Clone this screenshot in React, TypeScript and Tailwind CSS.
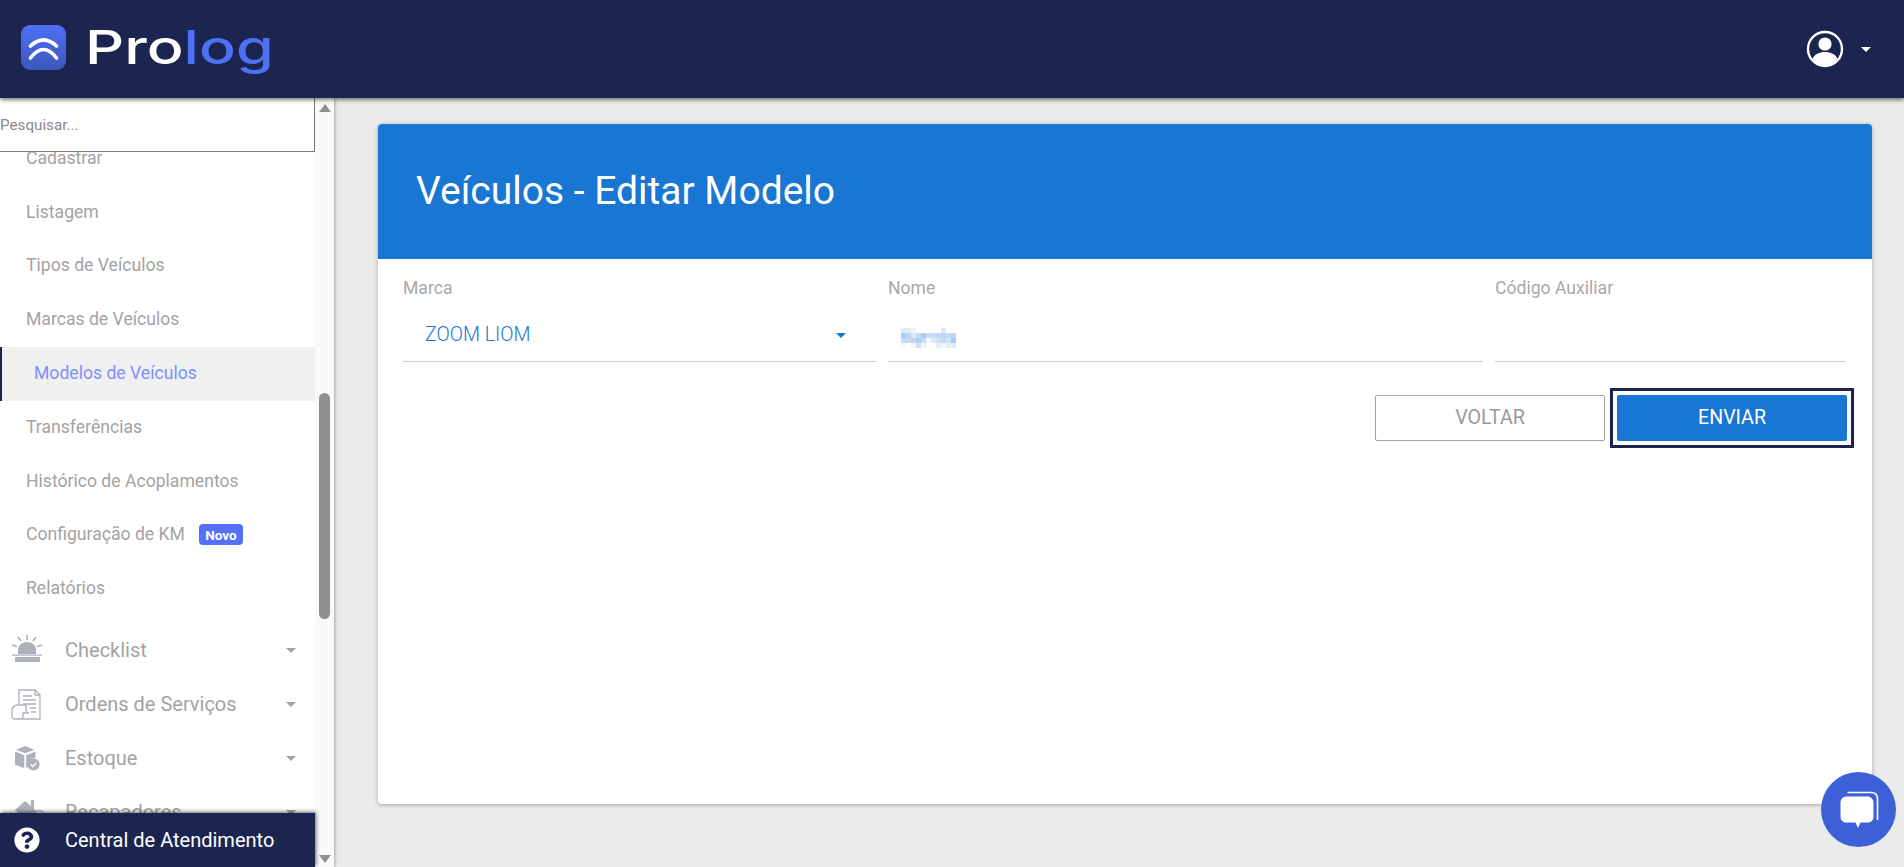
import React from 'react';
import { FaQuestionCircle } from 'react-icons/fa';

const subItems = ['Cadastrar', 'Listagem', 'Tipos de Veículos', 'Marcas de Veículos', 'Modelos de Veículos', 'Transferências', 'Histórico de Acoplamentos', 'Configuração de KM', 'Relatórios'];

const Caret = ({ className }: { className: string }) => (
  <span className={`w-0 h-0 border-x-[5px] border-x-transparent border-t-[5px] ${className}`} />
);

const SirenIcon = () => (
  <svg width="32" height="32" viewBox="0 0 32 32" fill="#adb2bd">
    <path d="M7 20v-4c0-5 4-8 9-8s9 3 9 8v4z" />
    <path d="M1 20.500h30v1.200H1zM4 23h25v5H4z" />
    <path d="M16 1v5M7 3l3 4M25 3l-3 4M1 11l5 1.500M31 11l-5 1.500" stroke="#adb2bd" strokeWidth="1.6" />
  </svg>
);

const OrdersIcon = () => (
  <svg width="32" height="32" viewBox="0 0 32 32" fill="none" stroke="#adb2bd" strokeWidth="1.300">
    <path d="M8 16V2h16l5 5v24H10" />
    <path d="M24 2v5h5" />
    <path d="M1 22c0-3 3-5 6-5h8v5c0 2 2 3 3 3H12v4c0 2-2 2-4 2H4c-2 0-3-1-3-3z" />
    <path d="M12 8h9M12 12h13M12 16h13M19 20h6M20 24h5" strokeWidth="1.500" />
  </svg>
);

const StockIcon = () => (
  <svg width="26" height="26" viewBox="0 0 28 28" fill="#adb2bd" className="ml-[4px]">
    <path d="M11 1l10 4-10 4L1 5z" />
    <path d="M0 7l10 4v14L0 21zM12 11l10-4v7a8 8 0 0 0-8 8v2l-2 1z" />
    <circle cx="20" cy="21" r="6.500" />
    <path d="M17 21l2.200 2.200 4-4" stroke="#fff" strokeWidth="1.400" fill="none" />
  </svg>
);

const HouseIcon = () => (
  <svg width="32" height="32" viewBox="0 0 32 32" fill="#adb2bd" className="ml-[2px]">
    <path d="M1 15L12 5l6 5V4h3v9l3 3h-2v12H4V15z" />
    <circle cx="26" cy="19" r="4.500" fill="none" stroke="#adb2bd" strokeWidth="1.500" />
  </svg>
);

const groups = [
  { label: 'Checklist', icon: <SirenIcon /> },
  { label: 'Ordens de Serviços', icon: <OrdersIcon /> },
  { label: 'Estoque', icon: <StockIcon /> },
  { label: 'Recapadores', icon: <HouseIcon /> },
];

// nome borrado na tela original
const blurRows = [
  ['#e3edf8', '#e3edf8', '#f0f5fb', '#fff', '#fff', '#fff', '#fff', '#fff', '#dfe9f7', '#fff', '#fff'],
  ['#aaccef', '#bdd6f2', '#dbe8f7', '#c7dcf4', '#aaccef', '#c7dcf4', '#c7dcf4', '#c0d8f3', '#bdd6f2', '#c7dcf4', '#bdd6f2'],
  ['#c7dcf4', '#c7dcf4', '#bdd6f2', '#b4d1f0', '#c7dcf4', '#f5f8fc', '#dbe8f7', '#cfe1f5', '#c7dcf4', '#cfe1f5', '#a9caee'],
  ['#f3f6fb', '#fff', '#f3f6fb', '#d2e3f6', '#f3f6fb', '#fafcfe', '#fff', '#e3edf8', '#f3f6fb', '#e3edf8', '#e3edf8'],
];

const BlurredName = () => (
  <svg width="55" height="20" viewBox="0 0 11 4" shapeRendering="crispEdges">
    {blurRows.map((row, y) => row.map((c, x) => <rect key={`${x}-${y}`} x={x} y={y} width="1" height="1" fill={c} />))}
  </svg>
);

export default function App() {
  return (
    <div className="relative w-[1904px] h-[867px] flex flex-col overflow-hidden bg-[#ebebeb] font-['Roboto',sans-serif]">
      <header className="h-[98px] shrink-0 bg-[#1b2550] flex items-center justify-between shadow-[0_2px_4px_rgba(0,0,0,0.5)] relative z-20">
        <div className="flex items-center pl-[21px] pb-[4px]">
          <div className="w-[45px] h-[45px] rounded-[9px] bg-gradient-to-b from-[#4f6ff5] to-[#3b58bb]">
            <svg width="45" height="45" viewBox="0 0 45 45" fill="none" stroke="#fff" strokeWidth="3.600" strokeLinecap="round">
              <path d="M9.500 21Q22.500 9 35.500 21" />
              <path d="M9.500 33Q22.500 16 35.500 33" />
            </svg>
          </div>
          <span className="ml-[19px] mb-[2px] text-[47px] leading-none font-medium font-['Inter',sans-serif] origin-left scale-x-[1.3] text-white">
            Pro<span className="text-[#4e70f3]">log</span>
          </span>
        </div>
        <div className="flex items-center pr-[33px]">
          <svg width="38" height="38" viewBox="0 0 38 38">
            <circle cx="19" cy="19" r="17" fill="none" stroke="#fff" strokeWidth="2.400" />
            <circle cx="19" cy="14" r="6.600" fill="#fff" />
            <path d="M6.500 29c2-5 7-7 12.500-7s10.500 2 12.500 7c-3 4-7.500 6.500-12.500 6.500S9.500 33 6.500 29z" fill="#fff" />
          </svg>
          <Caret className="ml-[17px] border-t-white" />
        </div>
      </header>

      <div className="flex-1 flex min-h-0">
        <aside className="w-[334px] shrink-0 flex relative bg-white shadow-[1px_0_3px_rgba(0,0,0,0.3)] z-10 overflow-hidden">
          <nav className="w-[315px] pt-[34px] text-[17.600px] text-[#a3a3a3]">
            {subItems.map((item) => (
              item === 'Modelos de Veículos' ? (
                <div key={item} className="h-[54px] flex items-center pl-[32px] pb-[1px] bg-[#f0f0f0] border-l-2 border-[#1b2550] text-[#7d90fb]">
                  {item}
                </div>
              ) : (
                <div key={item} className="h-[53.800px] flex items-center pl-[26px] pb-[2px]">
                  {item}
                  {item === 'Configuração de KM' && (
                    <span className="ml-[14px] h-[21px] w-[44px] rounded-[4px] bg-[#5270f8] text-white text-[13.500px] font-bold flex items-center justify-center">Novo</span>
                  )}
                </div>
              )
            ))}
            <div className="mt-[7px] text-[20px]">
              {groups.map((g) => (
                <div key={g.label} className="h-[54px] flex items-center">
                  <span className="w-[65px] pl-[11px] flex items-center">{g.icon}</span>
                  <span className="flex-1">{g.label}</span>
                  <Caret className="mr-[19px] border-t-[#a3a3a3]" />
                </div>
              ))}
            </div>
          </nav>

          <div className="w-[19px] shrink-0 bg-[#fafafa] flex flex-col items-center pt-[6px] pb-[4px]">
            <span className="w-0 h-0 border-x-[6px] border-x-transparent border-b-[8px] border-b-[#8f8f8f]" />
            <div className="w-[11px] h-[226px] rounded-[6px] bg-[#8f8f8f] mt-[281px]" />
            <span className="w-0 h-0 mt-auto border-x-[6px] border-x-transparent border-t-[8px] border-t-[#8f8f8f]" />
          </div>

          {/* Busca fixa sobre a lista */}
          <div className="absolute top-0 left-0 w-[315px] h-[54px] pt-[1px] bg-white border-r border-b border-[#7a7a7a] flex items-center text-[15.200px] text-[#8a8a8a]">
            Pesquisar...
          </div>

          {/* Atalho fixo no rodapé */}
          <div className="absolute bottom-0 left-0 w-[315px] h-[54px] bg-[#1b2550] flex items-center text-white text-[20px] shadow-[1px_-1px_4px_rgba(0,0,0,0.6)]">
            <FaQuestionCircle className="ml-[14px] w-[26px] h-[26px]" />
            <span className="ml-[25px]">Central de Atendimento</span>
          </div>
        </aside>

        <main className="flex-1 pt-[26px] pl-[44px] pr-[32px] pb-[63px]">
          <div className="h-full bg-white rounded-[4px] shadow-[0_1px_4px_rgba(0,0,0,0.3)] overflow-hidden">
            <div className="h-[135px] bg-[#1976d2] flex items-center pl-[38px] text-white text-[39px]">
              Veículos - Editar Modelo
            </div>
            <div className="pt-[20px] px-[25px]">
              <div className="flex gap-[12px] text-[17.600px]">
                <div className="w-[473px]">
                  <div className="text-[#a8a8a8] h-[19px] leading-[19px]">Marca</div>
                  <div className="mt-[11px] h-[53px] border-b border-[#cfcfcf] flex items-center justify-between pl-[22px] pr-[30px] text-[19.600px] font-light text-[#1976d2]">
                    <span>ZOOM LIOM</span>
                    <Caret className="border-t-[#1976d2]" />
                  </div>
                </div>
                <div className="w-[595px]">
                  <div className="text-[#a8a8a8] h-[19px] leading-[19px]">Nome</div>
                  <div className="mt-[11px] h-[53px] pt-[6px] pl-[13px] border-b border-[#cfcfcf] flex items-center">
                    <BlurredName />
                  </div>
                </div>
                <div className="w-[351px]">
                  <div className="text-[#a8a8a8] h-[19px] leading-[19px]">Código Auxiliar</div>
                  <div className="mt-[11px] h-[53px] border-b border-[#cfcfcf]" />
                </div>
              </div>
              <div className="flex justify-end items-center gap-[5px] mt-[26px] -mr-[7px] text-[19.600px]">
                <button className="w-[230px] h-[46px] rounded-[2px] border border-[#a3a3a3] text-[#9a9a9a]">VOLTAR</button>
                <div className="border-[3px] border-[#1b2550] p-[4px]">
                  <button className="block w-[230px] h-[46px] rounded-[2px] bg-[#1976d2] text-white">ENVIAR</button>
                </div>
              </div>
            </div>
          </div>
        </main>
      </div>

      {/* Botão de chat flutuante */}
      <button className="absolute left-[1821px] top-[772px] z-30 w-[75px] h-[75px] rounded-full bg-[#3d60d8] flex items-center justify-center">
        <svg width="40" height="40" viewBox="0 0 40 40" fill="#fff">
          <path d="M8.500 2.500H32Q38.500 2.500 38.500 9V30" fill="none" stroke="#fff" strokeWidth="1.600" />
          <path d="M8 6.500h20c4 0 6.500 2.500 6.500 6.500v13.500c0 4-2.500 6-6.500 6h-6.500L19 38l-2.500-5.500H8c-4 0-6.500-2-6.500-6V13c0-4 2.500-6.500 6.500-6.500z" />
        </svg>
      </button>
    </div>
  );
}
